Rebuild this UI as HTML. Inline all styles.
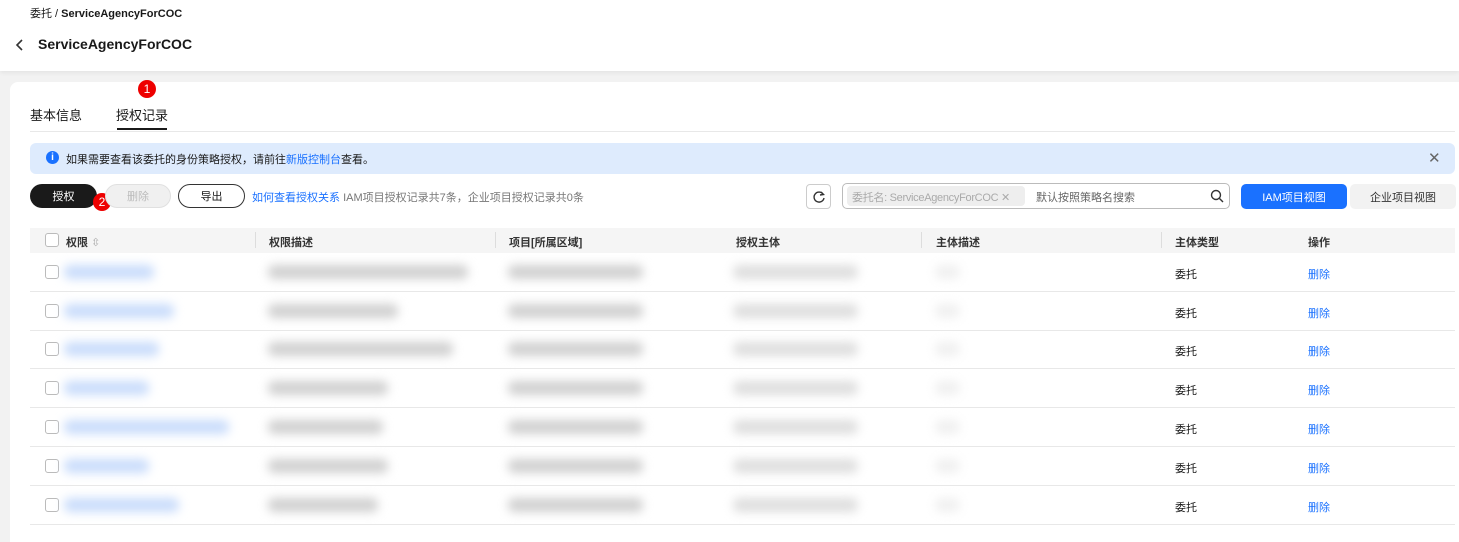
<!DOCTYPE html>
<html><head><meta charset="utf-8"><style>
*{box-sizing:border-box;margin:0;padding:0}
body{width:1459px;height:530px;overflow:hidden;background:#f2f2f2;font-family:"Liberation Sans","Noto Sans CJK SC",sans-serif;font-size:11px;color:#191919;position:relative}
.abs{position:absolute;white-space:nowrap}
.hdr{left:0;top:0;width:1459px;height:71px;background:#fff;box-shadow:0 2px 4px rgba(0,0,0,.06)}
.card{left:10px;top:82px;width:1449px;height:460px;background:#fff;border-radius:8px 0 0 0}
.btn{position:absolute;height:24px;border-radius:12px;font-size:11px;display:flex;align-items:center;justify-content:center;white-space:nowrap}
.badge{position:absolute;width:18px;height:18px;border-radius:9px;background:#e00;color:#fff;font-size:12px;display:flex;align-items:center;justify-content:center}
.th{position:absolute;top:234px;font-size:11px;color:#333;font-weight:bold;white-space:nowrap}
.sep{position:absolute;top:232px;width:1px;height:16px;background:#ddd}
.blur{position:absolute;height:14px;border-radius:6px;filter:blur(5px)}
.cb{position:absolute;left:45px;width:14px;height:14px;border:1px solid #bbb;border-radius:3px;background:#fff}
.line{position:absolute;left:30px;width:1425px;height:1px;background:#e8e8e8}
</style></head><body>
<div class="abs hdr"></div>
<div class="abs" style="left:30px;top:5px;font-size:11px;color:#191919">委托 / <span style="font-weight:bold">ServiceAgencyForCOC</span></div>
<svg class="abs" style="left:14px;top:38px" width="12" height="14"><path d="M8 2 L3 7 L8 12" stroke="#333" stroke-width="1.6" fill="none"/></svg>
<div class="abs" style="left:38px;top:36px;font-size:14px;font-weight:bold">ServiceAgencyForCOC</div>
<div class="abs card"></div>
<div class="abs" style="left:30px;top:105px;font-size:13px">基本信息</div>
<div class="abs" style="left:116px;top:105px;font-size:13px">授权记录</div>
<div class="abs" style="left:117px;top:128px;width:50px;height:2px;background:#191919"></div>
<div class="abs" style="left:30px;top:131px;width:1425px;height:1px;background:#e8e8e8"></div>
<div class="badge" style="left:138px;top:80px">1</div>
<div class="abs" style="left:30px;top:143px;width:1425px;height:31px;background:#deebfd;border-radius:6px"></div>
<div class="abs" style="left:46px;top:151px;width:13px;height:13px;border-radius:7px;background:#1a71ff;color:#fff;font-size:10px;font-weight:bold;text-align:center;line-height:13px">i</div>
<div class="abs" style="left:66px;top:151px">如果需要查看该委托的身份策略授权，请前往<span style="color:#1a71ff">新版控制台</span>查看。</div>
<div class="abs" style="left:1428px;top:149px;font-size:15px;color:#666">✕</div>
<div class="btn" style="left:30px;top:184px;width:67px;background:#1a1a1a;color:#fff">授权</div>
<div class="badge" style="left:93px;top:193px">2</div>
<div class="btn" style="left:105px;top:184px;width:66px;background:#f0f0f0;color:#bbb;border:1px solid #e0e0e0">删除</div>
<div class="btn" style="left:178px;top:184px;width:67px;border:1px solid #333">导出</div>
<div class="abs" style="left:252px;top:189px;color:#1a71ff">如何查看授权关系 <span style="color:#777">IAM项目授权记录共7条，企业项目授权记录共0条</span></div>
<div class="abs" style="left:806px;top:184px;width:25px;height:25px;border:1px solid #ccc;border-radius:4px"></div>
<svg class="abs" style="left:812px;top:190px" width="14" height="14"><path d="M11 4 A5 5 0 1 0 12 8" stroke="#333" stroke-width="1.4" fill="none"/><path d="M9 2 L11.5 4.5 L8 5" stroke="#333" stroke-width="1.4" fill="none"/></svg>
<div class="abs" style="left:842px;top:183px;width:388px;height:26px;border:1px solid #bbb;border-radius:5px"></div>
<div class="abs" style="left:847px;top:186px;width:178px;height:20px;background:#eee;border-radius:4px;color:#aaa;padding:3px 0 0 5px;font-size:11px;letter-spacing:-0.3px">委托名: ServiceAgencyForCOC ✕</div>
<div class="abs" style="left:1036px;top:189px;color:#666">默认按照策略名搜索</div>
<svg class="abs" style="left:1210px;top:189px" width="14" height="14"><circle cx="6" cy="6" r="4.5" stroke="#333" stroke-width="1.4" fill="none"/><path d="M9.5 9.5 L13 13" stroke="#333" stroke-width="1.4"/></svg>
<div class="btn" style="left:1241px;top:184px;width:106px;height:25px;background:#1a71ff;color:#fff;border-radius:5px">IAM项目视图</div>
<div class="btn" style="left:1350px;top:184px;width:106px;height:25px;background:#f2f2f2;color:#333;border-radius:5px">企业项目视图</div>
<div class="abs" style="left:30px;top:228px;width:1425px;height:25px;background:#f5f5f5"></div>
<div class="cb" style="top:233px"></div>
<div class="th" style="left:66px">权限 <span style="color:#aaa;font-weight:normal">⇳</span></div>
<div class="sep" style="left:255px"></div><div class="th" style="left:269px">权限描述</div>
<div class="sep" style="left:495px"></div><div class="th" style="left:509px">项目[所属区域]</div>
<div class="th" style="left:736px">授权主体</div>
<div class="sep" style="left:921px"></div><div class="th" style="left:936px">主体描述</div>
<div class="sep" style="left:1161px"></div><div class="th" style="left:1175px">主体类型</div>
<div class="th" style="left:1308px">操作</div>
<div id="rows"></div>
<script>
var ys=[253,292,330,369,408,447,486],w1=[90,110,95,85,165,85,115],w2=[200,130,185,120,115,120,110];
var h='';
ys.forEach(function(y,i){
h+='<div class="cb" style="top:'+(y+12)+'px"></div>';
h+='<div class="blur" style="left:64px;top:'+(y+12)+'px;width:'+w1[i]+'px;background:#c9dcfb"></div>';
h+='<div class="blur" style="left:268px;top:'+(y+12)+'px;width:'+w2[i]+'px;background:#d0d0d0"></div>';
h+='<div class="blur" style="left:508px;top:'+(y+12)+'px;width:135px;background:#d0d0d0"></div>';
h+='<div class="blur" style="left:733px;top:'+(y+12)+'px;width:125px;background:#dedede"></div>';
h+='<div class="blur" style="left:935px;top:'+(y+12)+'px;width:25px;background:#f0f0f0"></div>';
h+='<div class="abs" style="left:1175px;top:'+(y+13)+'px">委托</div>';
h+='<div class="abs" style="left:1308px;top:'+(y+13)+'px;color:#1a71ff">删除</div>';
h+='<div class="line" style="top:'+(y+38)+'px"></div>';
});
document.getElementById('rows').innerHTML=h;
</script>
</body></html>
